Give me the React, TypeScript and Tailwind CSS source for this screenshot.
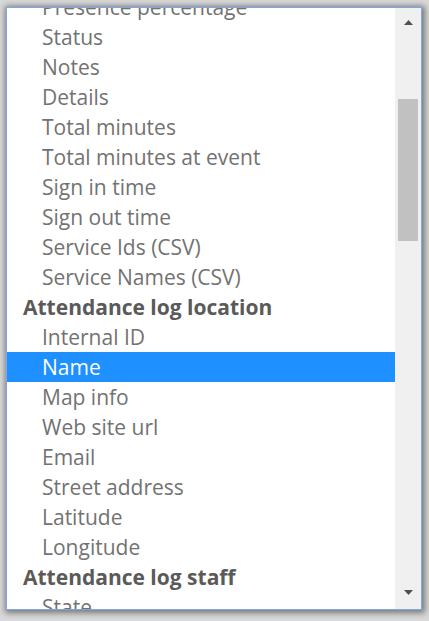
const rows: { label: string; group?: boolean; selected?: boolean }[] = [
  { label: "Presence percentage" },
  { label: "Status" },
  { label: "Notes" },
  { label: "Details" },
  { label: "Total minutes" },
  { label: "Total minutes at event" },
  { label: "Sign in time" },
  { label: "Sign out time" },
  { label: "Service Ids (CSV)" },
  { label: "Service Names (CSV)" },
  { label: "Attendance log location", group: true },
  { label: "Internal ID" },
  { label: "Name", selected: true },
  { label: "Map info" },
  { label: "Web site url" },
  { label: "Email" },
  { label: "Street address" },
  { label: "Latitude" },
  { label: "Longitude" },
  { label: "Attendance log staff", group: true },
  { label: "State" },
];

function Row({ label, group, selected }: { label: string; group?: boolean; selected?: boolean }) {
  let cls = "flex h-[30px] items-center whitespace-nowrap pt-[2px] ";
  if (group) cls += "pl-[16px] font-bold text-[#5a5a5a]";
  else if (selected) cls += "pl-[35px] bg-[#1e90ff] text-white";
  else cls += "pl-[35px] text-[#727272]";
  return <div className={cls}>{label}</div>;
}

export default function App() {
  return (
    <div className="h-[621px] w-[429px] bg-[#d9d9d9] pl-[6px] pt-[7px]">
      <div
        className="flex h-[603px] w-[416px] border border-[#7fa6e6] bg-white shadow-[1px_1px_6px_2px_rgba(0,0,0,0.45)]"
        style={{ fontFamily: '"Open Sans", sans-serif' }}
      >
        <div className="flex-1 overflow-hidden text-[21px]">
          <div className="mt-[-16px]">
            {rows.map((r) => (
              <Row key={r.label} {...r} />
            ))}
          </div>
        </div>
        <div className="flex w-[26px] flex-col bg-[#f0f0f0]">
          <div className="flex h-[28px] items-center justify-center">
            <svg width="9" height="5" viewBox="0 0 9 5">
              <path d="M4.5 0L9 5H0z" fill="#505050" />
            </svg>
          </div>
          <div className="mx-[3px] mt-[63px] h-[142px] bg-[#c1c1c1]" />
          <div className="flex-1" />
          <div className="mb-[6px] flex h-[22px] items-center justify-center">
            <svg width="9" height="5" viewBox="0 0 9 5">
              <path d="M0 0H9L4.5 5z" fill="#505050" />
            </svg>
          </div>
        </div>
      </div>
    </div>
  );
}
